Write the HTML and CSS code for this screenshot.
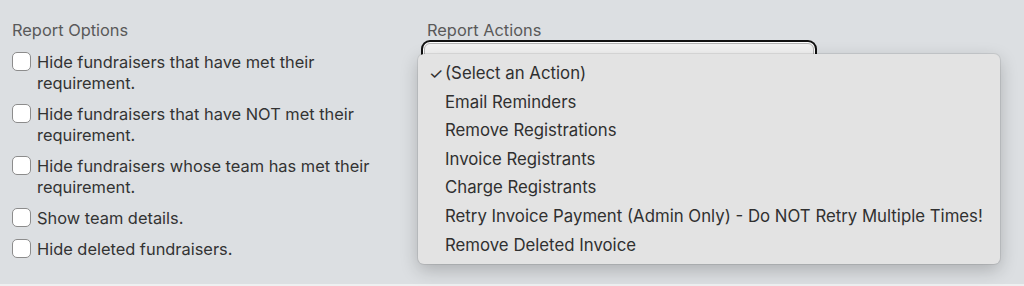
FILE: index.html
```
<!DOCTYPE html>
<html lang="en">
<head>
    <meta charset="UTF-8">
    <meta name="viewport" content="width=device-width, initial-scale=1.0">
    <title>report</title>
    <link rel="stylesheet" href="styles.css">
</head>
<body>
    <div class="page">
        <!-- options -->
        <div class="options">
            <p class="title">Report Options</p>
            <label class="item"><input type="checkbox"><span>Hide fundraisers that have met their requirement.</span></label>
            <label class="item"><input type="checkbox"><span>Hide fundraisers that have NOT met their requirement.</span></label>
            <label class="item"><input type="checkbox"><span>Hide fundraisers whose team has met their requirement.</span></label>
            <label class="item"><input type="checkbox"><span>Show team details.</span></label>
            <label class="item"><input type="checkbox"><span>Hide deleted fundraisers.</span></label>
        </div>

        <!-- actions -->
        <div class="actions">
            <p class="title title-actions">Report Actions</p>
            <div class="select"></div>
            <ul class="menu">
                <li class="checked">(Select an Action)</li>
                <li>Email Reminders</li>
                <li>Remove Registrations</li>
                <li>Invoice Registrants</li>
                <li>Charge Registrants</li>
                <li>Retry Invoice Payment (Admin Only) - Do NOT Retry Multiple Times!</li>
                <li>Remove Deleted Invoice</li>
            </ul>
        </div>
    </div>
    <div class="bottom"></div>
</body>
</html>
```
FILE: styles.css
```
body{
    margin: 0;
    background-color: #dcdfe2;
    font-family: Inter, "Liberation Sans", Arial, sans-serif;
    font-size: 16.4px;
    color: #333;
}
.page{
    display: grid;
    grid-template-columns: 411px 1fr;
    padding: 20px 12px 0 12px;
    height: 264px;
    box-sizing: border-box;
}
.title{
    margin: 0 0 11px 0;
    line-height: 21px;
    color: #595959;
}
.title-actions{
    padding-left: 4px;
    margin-bottom: 1px;
}
.item{
    display: flex;
    gap: 6px;
    line-height: 21px;
    margin-bottom: 10px;
    width: 380px;
}
.item input{
    appearance: none;
    -webkit-appearance: none;
    flex: none;
    width: 19px;
    height: 19px;
    margin: 0;
    background-color: #fff;
    border: 1px solid #8c8c8c;
    border-radius: 5px;
    box-sizing: border-box;
}
/* select + open menu */
.actions{
    position: relative;
}
.select{
    width: 388px;
    height: 28px;
    margin-left: 1px;
    margin-top: 2px;
    background-color: #f2f2f2;
    border: 1px solid #b5b5b5;
    border-radius: 6px;
    box-shadow: 0 0 0 1px #fff, 0 0 0 3px #111;
}
.menu{
    position: absolute;
    left: -5px;
    top: 34px;
    width: 582px;
    margin: 0;
    padding: 5px 0;
    list-style: none;
    background-color: #e3e3e3;
    border-radius: 6px;
    box-shadow: 0 0 0 1px rgba(0,0,0,0.08), 0 6px 18px rgba(0,0,0,0.22);
    box-sizing: border-box;
    font-size: 16.8px;
}
.menu li{
    line-height: 28.6px;
    padding-left: 27px;
    color: #303030;
    position: relative;
}
.menu li.checked::before{
    content: "\2713";
    position: absolute;
    left: 11px;
    font-size: 16px;
}
.bottom{
    height: 22px;
    border-bottom: 2px solid #eef0f1;
    box-sizing: border-box;
}
```
